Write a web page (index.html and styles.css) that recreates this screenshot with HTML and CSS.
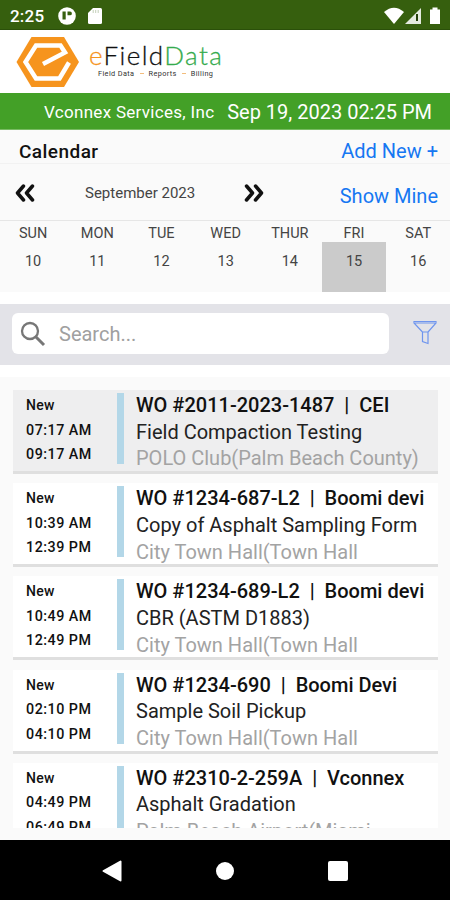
FILE: index.html
```html
<!DOCTYPE html>
<html lang="en">
<head>
    <meta charset="UTF-8">
    <meta name="viewport" content="width=device-width, initial-scale=1.0">
    <title>eFieldData Calendar</title>
    <link rel="stylesheet" href="styles.css">
</head>
<body>
    <div class="status-bar">
        <span class="clock">2:25</span>
        <svg class="app-icon" width="18" height="18" viewBox="0 0 18 18">
            <circle cx="9" cy="9" r="8.8" fill="#fff"/>
            <path d="M4.500 4.500h3.200v8H4.500zM9.500 4.500h2.500a1.800 1.800 0 0 1 0 3.800h-2.500z" fill="#365f0e"/>
        </svg>
        <svg class="sd-icon" width="14" height="16" viewBox="0 0 14 16">
            <path d="M5 0h7.500Q14 0 14 1.500v13q0 1.500-1.500 1.500h-11Q0 16 0 14.500V5z" fill="#fff"/>
            <path d="M5.200 2v3M7.700 2v3M10.200 2v3" stroke="#c3cfb8"/>
        </svg>
        <svg class="signal-icons" width="58" height="18" viewBox="0 0 58 18">
            <path d="M0 5Q10-3.500 20 5L10 17z" fill="#fff"/>
            <path d="M37 1v16H21z" fill="#e4eadf"/>
            <path d="M33 7v7" stroke="#243f09" stroke-width="2"/>
            <path d="M46 2.500h2.500V0.500h5v2H56V17H46z" fill="#fff"/>
        </svg>
    </div>
    <div class="logo-bar">
        <svg class="logo-mark" width="64" height="52" viewBox="0 0 64 52">
            <path d="M15.500 1h32.500L63 26 48 51H15.500L0.500 26z" fill="#f6941d"/>
            <path d="M27 28L49 16.500 44.500 9.500H20L9.500 26 20 42.500H43.500L53 26.500" fill="none" stroke="#fff" stroke-width="4.500"/>
        </svg>
        <div class="logo-text">
            <div class="brand"><span class="brand-e">e</span>Field<span class="brand-data">Data</span></div>
            <div class="tagline">
                <span>Field Data</span><i></i><span>Reports</span><i></i><span>Billing</span>
            </div>
        </div>
    </div>
    <div class="company-bar">
        <span class="company">Vconnex Services, Inc</span>
        <span class="date">Sep 19, 2023 02:25 PM</span>
    </div>
    <div class="calendar">
        <div class="calendar-title">
            <h1>Calendar</h1>
            <a class="link add-new">Add New +</a>
        </div>
        <div class="month-nav">
            <svg class="prev" width="20" height="18" viewBox="0 0 20 18">
                <path d="M8.500 2L2.500 9l6 7M17.500 2L11.500 9l6 7"/>
            </svg>
            <span class="month">September 2023</span>
            <svg class="next" width="20" height="18" viewBox="0 0 20 18">
                <path d="M2.500 2L8.500 9l-6 7M11.500 2L17.500 9l-6 7"/>
            </svg>
            <a class="link show-mine">Show Mine</a>
        </div>
        <div class="week">
            <div class="day"><span>SUN</span><b>10</b></div>
            <div class="day"><span>MON</span><b>11</b></div>
            <div class="day"><span>TUE</span><b>12</b></div>
            <div class="day"><span>WED</span><b>13</b></div>
            <div class="day"><span>THUR</span><b>14</b></div>
            <div class="day selected"><span>FRI</span><b>15</b></div>
            <div class="day"><span>SAT</span><b>16</b></div>
        </div>
    </div>
    <div class="search-bar">
        <div class="search-box">
            <svg width="26" height="26" viewBox="0 0 26 26" fill="none" stroke="#777">
                <circle cx="10" cy="10" r="8" stroke-width="2.300"/>
                <path d="M15.500 15.500L24 24" stroke-width="3"/>
            </svg>
            <span>Search...</span>
        </div>
        <svg class="filter" width="24" height="25" viewBox="0 0 24 25" fill="none" stroke="#6f95ee" stroke-width="1.200">
            <path d="M1 1.500h22v1.500L15 12v11.500L9.500 21.500v-9.500L1 3zM2 3h20M9.500 12H15"/>
        </svg>
    </div>
    <div class="order-list">
        <div class="order active">
            <div class="times"><p>New</p><p>07:17 AM</p><p>09:17 AM</p></div>
            <div class="bar"></div>
            <div class="details">
                <h2>WO #2011-2023-1487&nbsp; |&nbsp; CEI</h2>
                <p>Field Compaction Testing</p>
                <p class="place">POLO Club(Palm Beach County)</p>
            </div>
        </div>
        <div class="order">
            <div class="times"><p>New</p><p>10:39 AM</p><p>12:39 PM</p></div>
            <div class="bar"></div>
            <div class="details">
                <h2>WO #1234-687-L2&nbsp; |&nbsp; Boomi devi</h2>
                <p>Copy of Asphalt Sampling Form</p>
                <p class="place">City Town Hall(Town Hall</p>
            </div>
        </div>
        <div class="order">
            <div class="times"><p>New</p><p>10:49 AM</p><p>12:49 PM</p></div>
            <div class="bar"></div>
            <div class="details">
                <h2>WO #1234-689-L2&nbsp; |&nbsp; Boomi devi</h2>
                <p>CBR (ASTM D1883)</p>
                <p class="place">City Town Hall(Town Hall</p>
            </div>
        </div>
        <div class="order">
            <div class="times"><p>New</p><p>02:10 PM</p><p>04:10 PM</p></div>
            <div class="bar"></div>
            <div class="details">
                <h2>WO #1234-690&nbsp; |&nbsp; Boomi Devi</h2>
                <p>Sample Soil Pickup</p>
                <p class="place">City Town Hall(Town Hall</p>
            </div>
        </div>
        <div class="order">
            <div class="times"><p>New</p><p>04:49 PM</p><p>06:49 PM</p></div>
            <div class="bar"></div>
            <div class="details">
                <h2>WO #2310-2-259A&nbsp; |&nbsp; Vconnex</h2>
                <p>Asphalt Gradation</p>
                <p class="place">Palm Beach Airport(Miami</p>
            </div>
        </div>
    </div>
    <div class="nav-bar">
        <svg width="20" height="22" viewBox="0 0 20 22"><path d="M18.500 1.500v19L1.500 11z" fill="#fff" stroke="#fff" stroke-width="2" stroke-linejoin="round"/></svg>
        <div class="home"></div>
        <div class="recent"></div>
    </div>
</body>
</html>
```
FILE: styles.css
```css
* {
    margin: 0;
    padding: 0;
    box-sizing: border-box;
}
body {
    width: 450px;
    height: 900px;
    display: flex;
    flex-direction: column;
    overflow: hidden;
    background: #fafafa;
    color: #111;
    font-family: Roboto, "Liberation Sans", sans-serif;
    white-space: nowrap;
}

/* top bars */
.status-bar {
    height: 30px;
    display: flex;
    align-items: center;
    padding: 2px 8px 0 10px;
    background: #365f0e;
    border-bottom: 1px solid #2b500a;
    color: #fff;
}
.clock {
    width: 48px;
    font-size: 17px;
    font-weight: 500;
    letter-spacing: 0.2px;
}
.sd-icon {
    margin-left: 12px;
}
.signal-icons {
    margin-left: auto;
}
.logo-bar {
    height: 63px;
    display: flex;
    padding: 6px 0 0 16px;
    background: #fff;
}
.logo-text {
    margin: 6px 0 0 9px;
}
.brand {
    font-family: Lato, sans-serif;
    font-size: 26px;
    font-weight: 300;
    line-height: 27px;
    letter-spacing: 1.4px;
    color: #111;
    -webkit-text-stroke: 0.3px;
}
.brand-e {
    color: #f6941d;
}
.brand-data {
    color: #35ab4d;
}
.tagline {
    display: flex;
    align-items: center;
    gap: 5px;
    padding-left: 9px;
    font-size: 7.300px;
    line-height: 9px;
    letter-spacing: 0.4px;
    color: #333;
}
.tagline i {
    width: 4px;
    height: 1px;
    background: #f3bd7c;
}
.company-bar {
    height: 37px;
    display: flex;
    align-items: center;
    padding: 2px 18px 0 44px;
    background: #43a027;
    border-bottom: 1px solid #78bb63;
    color: #fff;
}
.company {
    font-size: 17px;
    letter-spacing: 0.3px;
}
.date {
    margin-left: auto;
    font-size: 20px;
}

/* calendar */
.calendar {
    height: 162px;
    background: #fafafa;
}
.calendar-title {
    height: 34px;
    display: flex;
    align-items: center;
    justify-content: space-between;
    padding: 9px 12px 0 19px;
    border-bottom: 1px solid #f2f2f2;
}
.calendar-title h1 {
    font-size: 19px;
    font-weight: 500;
    letter-spacing: 0.45px;
}
.link {
    font-size: 20px;
    color: #1677f2;
}
.month-nav {
    height: 57px;
    display: flex;
    align-items: center;
    padding: 2px 12px 0 15px;
    border-bottom: 1px solid #e6e6e6;
}
.month-nav path {
    fill: none;
    stroke: #111;
    stroke-width: 3.5;
    stroke-linecap: round;
    stroke-linejoin: round;
}
.month {
    width: 110px;
    margin: 0 49px 0 50px;
    font-size: 15px;
    color: #444;
}
.show-mine {
    margin: 6px 0 0 auto;
}
.week {
    display: grid;
    grid-template-columns: repeat(7, 64.200px);
    height: 71px;
    padding-left: 1px;
}
.day {
    display: flex;
    flex-direction: column;
    color: #444;
    font-size: 14.500px;
    text-align: center;
}
.day span {
    height: 21px;
    line-height: 25px;
}
.day b {
    flex: 1;
    padding-top: 11px;
    font-weight: 400;
    line-height: 17px;
}
.selected b {
    background: #cbcbcb;
}

/* search */
.search-bar {
    height: 85px;
    padding: 0 13px 2px 12px;
    display: flex;
    align-items: center;
    justify-content: space-between;
    background: #e3e3e8;
    border-top: 12px solid #fff;
    border-bottom: 12px solid #fff;
}
.search-box {
    width: 377px;
    height: 41px;
    display: flex;
    align-items: center;
    gap: 13px;
    padding-left: 8px;
    border-radius: 6px;
    background: #fff;
    color: #a0a0a0;
    font-size: 20px;
}
.filter {
    margin-top: -2px;
}

/* work orders */
.order-list {
    height: 451px;
    padding: 13px 12px 0 13px;
    overflow: hidden;
}
.order {
    height: 84px;
    margin-bottom: 9.200px;
    display: flex;
    padding: 3px 0 0 13px;
    background: #fff;
    border-bottom: 3px solid #dfdfdf;
}
.order.active {
    background: #eeeeef;
}
.times {
    width: 91px;
    font-size: 14.300px;
    font-weight: 500;
    line-height: 24.500px;
    letter-spacing: 0.5px;
}
.times p:first-child {
    font-size: 14px;
    letter-spacing: 0.3px;
}
.bar {
    width: 7px;
    height: 71px;
    background: #b3d7e8;
}
.details {
    margin: -1px 0 0 12px;
    font-size: 20px;
    line-height: 26.700px;
}
.details h2 {
    font-size: 20px;
    font-weight: 500;
}
.details p {
    color: #222;
}
.details .place {
    color: #a3a3a3;
}

/* system navigation */
.nav-bar {
    height: 60px;
    margin-top: auto;
    display: flex;
    align-items: center;
    justify-content: space-between;
    padding: 1px 102px 0;
    background: #000;
}
.home {
    width: 18px;
    height: 18px;
    border-radius: 50%;
    background: #fff;
}
.recent {
    width: 20px;
    height: 20px;
    border-radius: 2px;
    background: #fff;
}
```
